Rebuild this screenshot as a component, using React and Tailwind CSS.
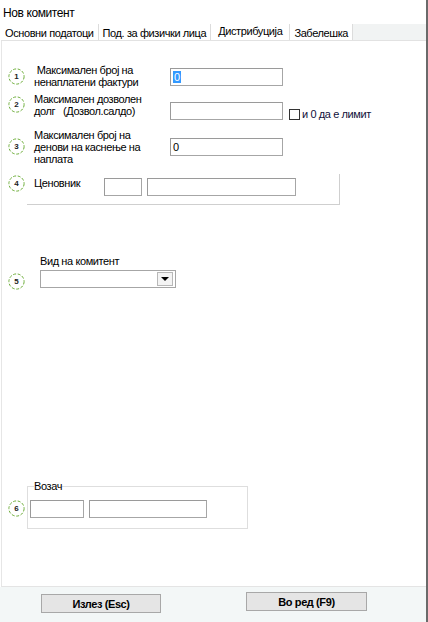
import React from "react";

function Step({ n, className = "" }) {
  return (
    <div className={"relative w-[17px] h-[17px] shrink-0 " + className}>
      <svg width="17" height="17" viewBox="0 0 17 17" className="absolute inset-0">
        <circle cx="8.5" cy="8.5" r="7.6" fill="white" stroke="#6fae3c" strokeWidth="1" strokeDasharray="3 1.6" />
      </svg>
      <span className="relative flex w-full h-full items-center justify-center text-[8px] leading-none font-bold tracking-normal text-[#222]">
        {n}
      </span>
    </div>
  );
}

function Box({ className = "", children }) {
  return (
    <div className={"h-[18px] bg-white border border-[#a6a6a6] border-t-[#9a9a9a] border-l-[#9a9a9a] flex items-center pl-[2px] " + className}>
      {children}
    </div>
  );
}

export default function App() {
  const tabs = ["Основни податоци", "Под. за физички лица", "Дистрибуција", "Забелешка"];
  return (
    <div className="w-[428px] h-[622px] bg-white flex flex-col font-['Liberation_Sans',Arial,sans-serif] text-[11px] leading-[12px] tracking-[-0.4px] text-black border-r-2 border-[#6a6a6a] overflow-hidden">
      <div className="h-[24px] pl-[3px] pt-[7px] text-[12px] leading-[13px]">Нов комитент</div>

      {/* tabs */}
      <div className="h-[17px] flex items-stretch border-b border-[#e2e2e2] bg-[#f1f3f3] ml-[1px]">
        {tabs.map((t, i) => (
          <div
            key={t}
            className={
              "flex border-r border-[#dcdcdc] bg-white whitespace-nowrap " +
              (i === 2 ? "items-start pt-[1px] px-[7px]" : "items-center pt-[2px] px-[4px]")
            }
          >
            {t}
          </div>
        ))}
      </div>

      {/* content */}
      <div className="flex-1 flex flex-col border-l border-[#e6e6e6] ml-[1px] border-b border-b-[#e4e4e4]">
        <div className="flex items-start mt-[23px]">
          <Step n="1" className="ml-[6px] mt-[4px]" />
          <div className="ml-[9px] w-[136px]">
            <div>&nbsp;Максимален број на</div>
            <div>ненаплатени фактури</div>
          </div>
          <Box className="w-[113px] mt-[4px]">
            <span className="bg-[#3399ff] text-white px-[1px] leading-[12px]">0</span>
          </Box>
        </div>

        <div className="flex items-start mt-[5px]">
          <Step n="2" className="ml-[6px] mt-[3px]" />
          <div className="ml-[9px] w-[136px] whitespace-pre">
            <div>Максимален дозволен</div>
            <div>долг   (Дозвол.салдо)</div>
          </div>
          <Box className="w-[113px] mt-[9px]" />
          <div className="flex items-center mt-[15px] ml-[6px]">
            <div className="w-[11px] h-[11px] border border-[#333] bg-white" />
            <span className="ml-[2px] text-[#10103a]">и 0 да е лимит</span>
          </div>
        </div>

        <div className="flex items-start mt-[9px]">
          <Step n="3" className="ml-[6px] mt-[9px]" />
          <div className="ml-[9px] w-[136px]">
            <div>Максимален број на</div>
            <div>денови на каснење на</div>
            <div>наплата</div>
          </div>
          <Box className="w-[113px] mt-[9px]">0</Box>
        </div>

        <div className="flex items-start mt-[9px]">
          <Step n="4" className="ml-[6px] mt-[1px]" />
          <div className="ml-[2px] w-[313px] h-[31px] border-r border-b border-[#cfcfcf] flex items-start pt-[4px]">
            <div className="ml-[7px] w-[70px] mt-[-1px]">Ценовник</div>
            <Box className="w-[38px]" />
            <Box className="w-[149px] ml-[5px]" />
          </div>
        </div>

        <div className="flex items-start mt-[50px]">
          <Step n="5" className="ml-[6px] mt-[18px]" />
          <div className="ml-[15px] flex flex-col">
            <div>Вид на комитент</div>
            <div className="mt-[3px] w-[136px] h-[18px] border border-[#a6a6a6] bg-white flex justify-end items-center pr-[2px]">
              <div className="w-[16px] h-[14px] border border-[#b8b8b8] bg-[#f4f4f4] flex items-center justify-center">
                <div className="w-0 h-0 border-l-[4px] border-r-[4px] border-t-[4px] border-l-transparent border-r-transparent border-t-black" />
              </div>
            </div>
          </div>
        </div>

        <div className="flex items-start mt-[190px]">
          <Step n="6" className="ml-[6px] mt-[20px]" />
          <fieldset className="ml-[2px] w-[221px] border border-[#dedede] pb-[10px]">
            <legend className="ml-[6px] leading-[12px]">Возач</legend>
            <div className="flex ml-[2px] pt-[8px]">
              <Box className="w-[54px]" />
              <Box className="w-[118px] ml-[5px]" />
            </div>
          </fieldset>
        </div>
      </div>

      {/* footer */}
      <div className="h-[35px] bg-[#f3f7f7] flex items-start font-bold">
        <div className="ml-[41px] mt-[7px] w-[120px] h-[19px] bg-[#e5e5e5] border border-[#a8a8a8] flex items-center justify-center">
          Излез (Esc)
        </div>
        <div className="ml-[85px] mt-[5px] w-[121px] h-[19px] bg-[#e5e5e5] border border-[#a8a8a8] flex items-center justify-center">
          Во ред (F9)
        </div>
      </div>
    </div>
  );
}
